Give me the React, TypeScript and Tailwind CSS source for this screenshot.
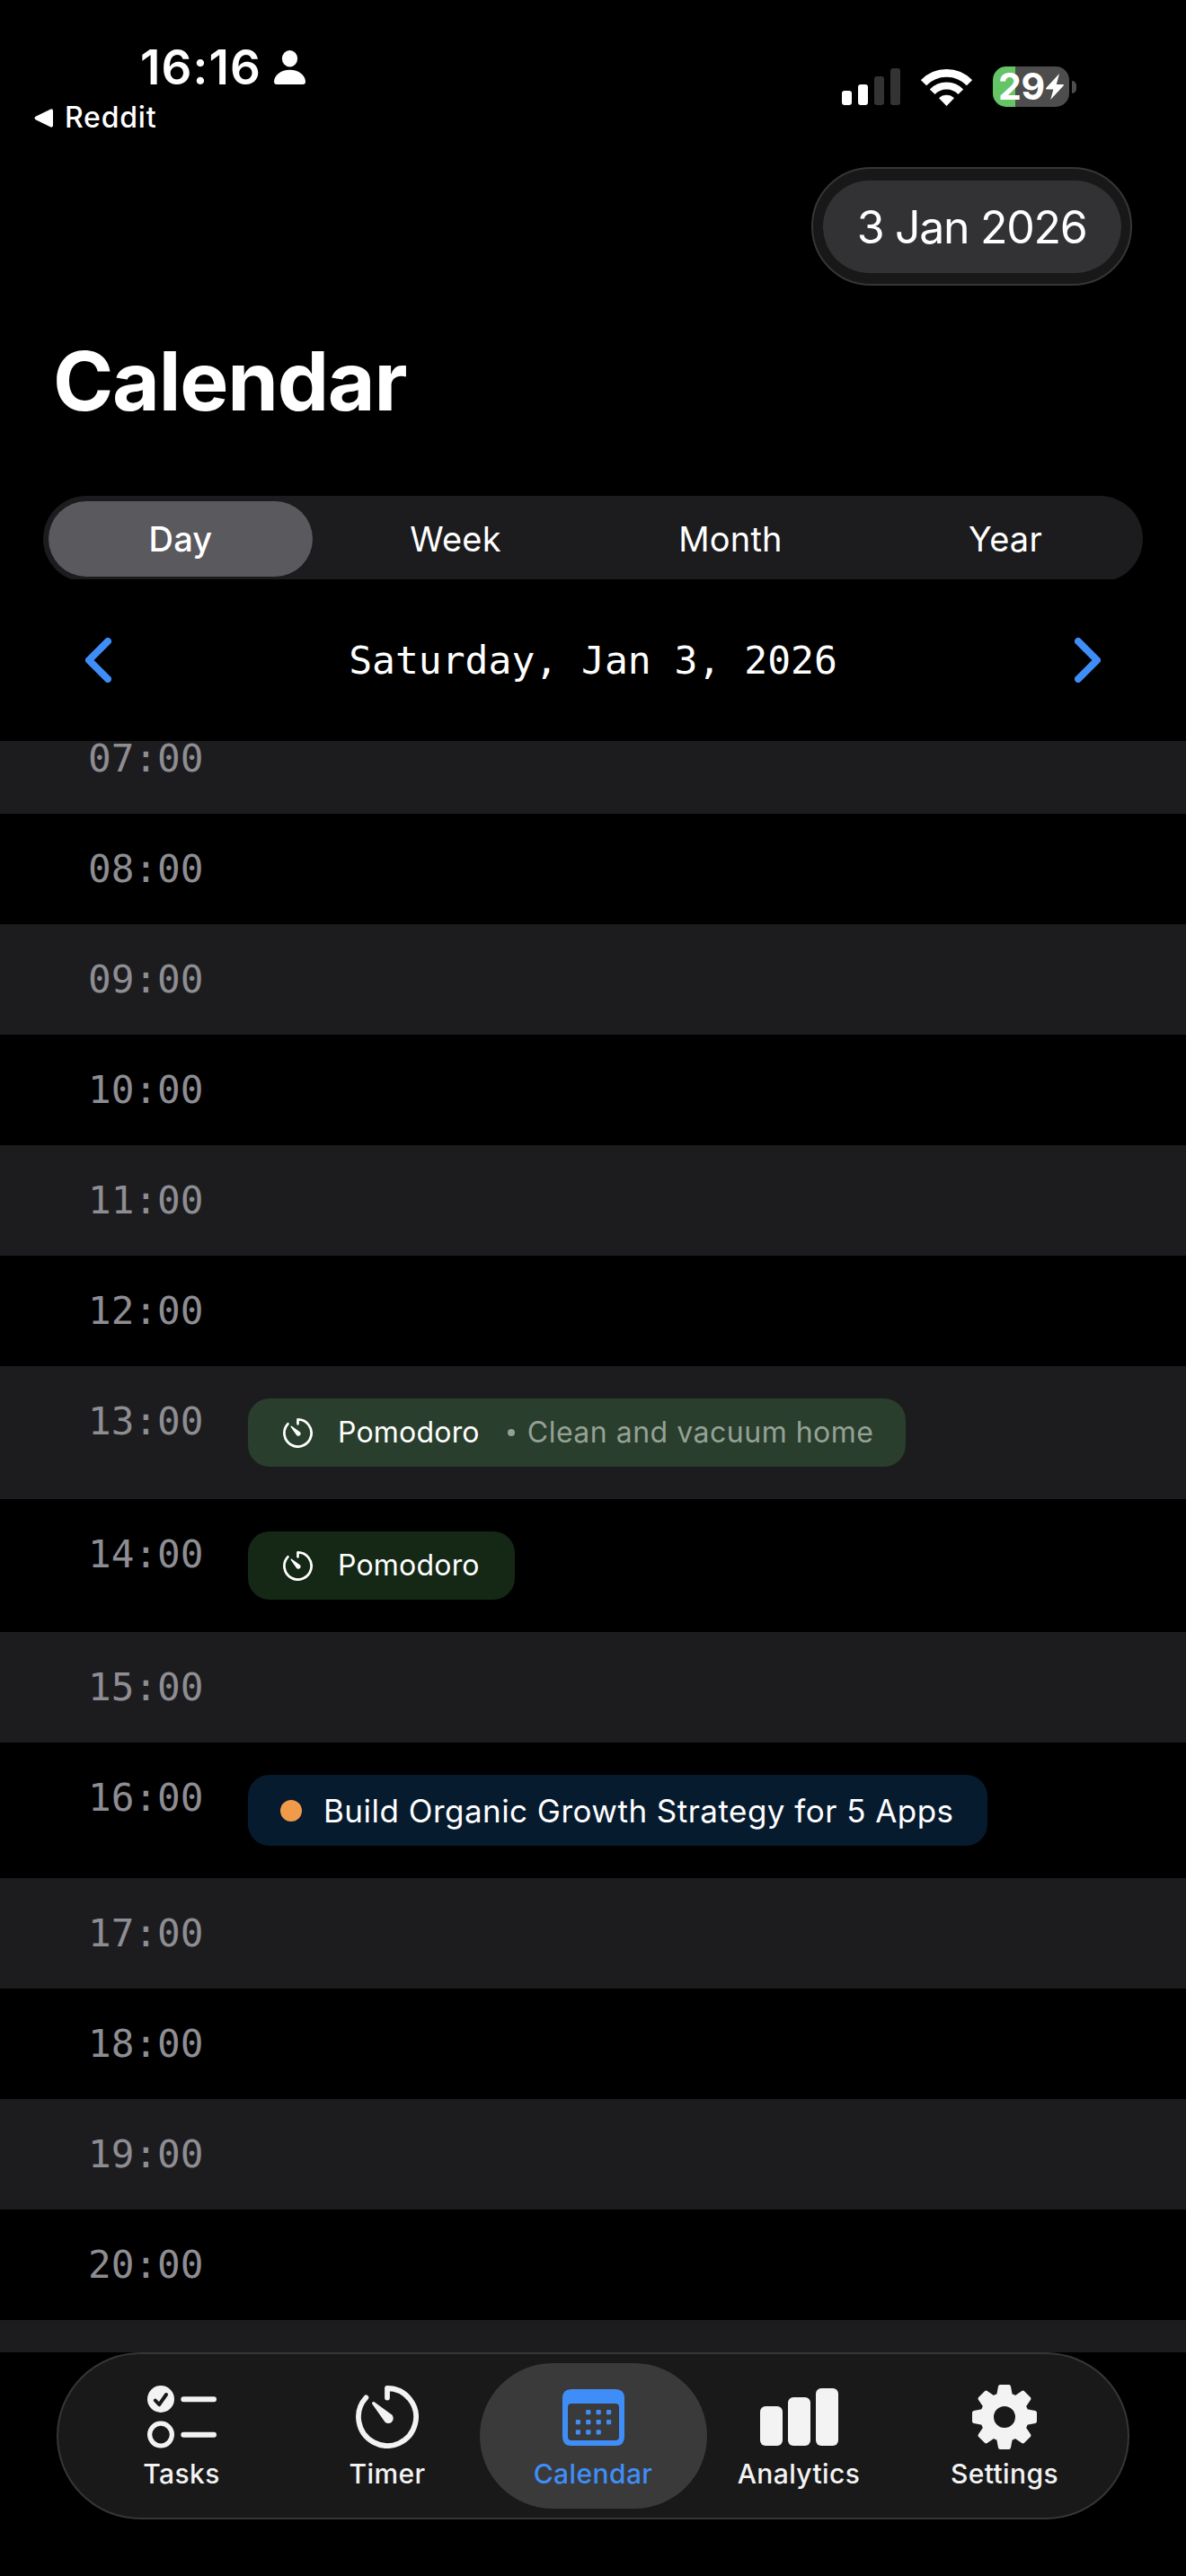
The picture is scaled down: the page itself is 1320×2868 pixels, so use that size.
import { FC, ReactNode, useState } from "react";
import clsx from "clsx";

type TabId = "tasks" | "timer" | "calendar" | "analytics" | "settings";

interface HourSlot {
  hour: string;
  className: string;
  event?: ReactNode;
}

const TimerIcon: FC<{ className?: string }> = ({ className }) => (
  <svg viewBox="0 0 70 70" fill="none" className={className}>
    <path d="M35 13.5V3A32 32 0 1 1 11.4 13.4" stroke="currentColor" strokeWidth="5.8" strokeLinecap="round" strokeLinejoin="round" />
    <path d="M18.3 20.6C17.4 19.2 19.2 17.4 20.6 18.3L38.4 31.3A5.6 5.6 0 1 1 31 38.6Z" fill="currentColor" />
  </svg>
);

const TasksIcon: FC = () => (
  <svg viewBox="0 0 77 70" fill="none" className="h-[70px] w-[77px]">
    <circle cx="15" cy="15" r="15" fill="currentColor" />
    <path d="M8.8 16.5L13.2 21.2L21 10" stroke="#191919" strokeWidth="4" strokeLinecap="round" strokeLinejoin="round" />
    <circle cx="15" cy="54.6" r="12.4" stroke="currentColor" strokeWidth="5.2" />
    <path d="M40.3 15.2H74M40.3 54.8H74" stroke="currentColor" strokeWidth="6" strokeLinecap="round" />
  </svg>
);

const CalendarIcon: FC = () => {
  const dots = [[1, 0], [2, 0], [3, 0], [0, 1], [1, 1], [2, 1], [3, 1], [0, 2], [1, 2], [2, 2]];
  return (
    <svg viewBox="0 0 69 63" className="h-[63px] w-[69px]" fill="currentColor">
      <path
        fillRule="evenodd"
        d="M10 0H59Q69 0 69 10V53Q69 63 59 63H10Q0 63 0 53V10Q0 0 10 0ZM10 16Q6 16 6 20V53Q6 57 10 57H59Q63 57 63 53V20Q63 16 59 16Z"
      />
      {dots.map(([col, row]) => (
        <rect key={`${col}-${row}`} x={14.8 + col * 11.4} y={23 + row * 11.1} width="5.2" height="5.2" rx="1" />
      ))}
    </svg>
  );
};

const AnalyticsIcon: FC = () => (
  <svg viewBox="0 0 87 64" className="h-[64px] w-[87px]" fill="currentColor">
    <rect x="0" y="20" width="25" height="44" rx="6" />
    <rect x="31" y="10" width="25" height="54" rx="6" />
    <rect x="62" y="0" width="25" height="64" rx="6" />
  </svg>
);

const SettingsIcon: FC = () => (
  <svg viewBox="-36 -36 72 72" className="h-[72px] w-[72px]" fill="currentColor">
    <circle r="19.5" fill="none" stroke="currentColor" strokeWidth="15" />
    {[0, 45, 90, 135, 180, 225, 270, 315].map(angle => (
      <path
        key={angle}
        transform={`rotate(${angle})`}
        d="M-4.8 -33.8H4.8L7 -22H-7Z"
        stroke="currentColor"
        strokeWidth="4.4"
        strokeLinejoin="round"
      />
    ))}
  </svg>
);

const StatusBar: FC = () => (
  <header className="flex h-[186px] flex-shrink-0 justify-between pr-[122px] pl-[38px] text-white">
    <div className="flex flex-col">
      <div className="mt-[45px] ml-[118px] flex h-[60px] items-center">
        <span className="text-[53px] leading-[60px] font-semibold tracking-[1.1px]">16:16</span>
        <svg viewBox="0 0 35 38" className="ml-[14px] h-[38px] w-[35px]" fill="currentColor">
          <ellipse cx="17.5" cy="9.2" rx="8.6" ry="9.2" />
          <path d="M0 35C0 28 7.5 21.8 17.5 21.8S35 28 35 35Q35 38 32 38H3Q0 38 0 35Z" />
        </svg>
      </div>
      <div className="mt-[6px] flex h-[40px] items-center gap-[13px]">
        <svg viewBox="0 0 21 21" className="h-[21px] w-[21px]" fill="currentColor">
          <path d="M18.5 0.4L1.6 8.8Q-0.6 10.5 1.6 12.2L18.5 20.6Q21 21 21 18.5V2.5Q21 0 18.5 0.4Z" />
        </svg>
        <span className="text-[32px] leading-[40px] font-medium tracking-[0.8px]">Reddit</span>
      </div>
    </div>
    <div className="mt-[74px] flex h-[45px] items-center">
      <div className="flex h-[41px] items-end gap-[7px]">
        <i className="h-[16px] w-[11px] rounded-[3px] bg-white" />
        <i className="h-[23px] w-[11px] rounded-[3px] bg-white" />
        <i className="h-[32px] w-[11px] rounded-[3px] bg-[#333333]" />
        <i className="h-[41px] w-[11px] rounded-[3px] bg-[#333333]" />
      </div>
      <svg viewBox="0 0 57 42" fill="none" stroke="currentColor" className="ml-[23px] h-[42px] w-[57px]">
        <path d="M3 16.2A35.4 35.4 0 0 1 54 16.2" strokeWidth="8.6" />
        <path d="M12.7 26.2A21.8 21.8 0 0 1 44.3 26.2" strokeWidth="8" />
        <path d="M28.5 42L20 33.2A12.5 12.5 0 0 1 37 33.2Z" fill="currentColor" stroke="none" />
      </svg>
      <div className="ml-[23px] flex h-[45px] w-[85px] items-center justify-center rounded-[15px] bg-[linear-gradient(to_right,#65c466_25px,#4d4d4d_25px)]">
        <span className="text-[41px] leading-[45px] font-bold tracking-[-0.3px]">29</span>
        <svg viewBox="0 0 20 29" className="ml-px h-[29px] w-[20px]" fill="currentColor">
          <path d="M15 0L0 16.2Q-0.4 17.4 1 17.4H8.4L5.2 29L19.8 13.2Q20.4 12 19 12H11.8Z" />
        </svg>
      </div>
      <i className="ml-[3px] h-[14px] w-[5px] rounded-r-full bg-[#4d4d4d]" />
    </div>
  </header>
);

const EventChip: FC<{ title: string; note?: string; className: string }> = ({ title, note, className }) => (
  <div className={clsx("mt-9 flex h-[76px] items-center rounded-[24px] pl-[39px] text-[32px] leading-[40px]", className)}>
    <TimerIcon className="h-[33px] w-[33px] text-white" />
    <span className="ml-[28px] tracking-[0.2px] text-white">{title}</span>
    {note && (
      <span className="ml-[31px] flex items-center gap-[14px] tracking-[0.5px] whitespace-nowrap text-[#95a197]">
        <i className="h-[8px] w-[8px] rounded-full bg-current" />
        {note}
      </span>
    )}
  </div>
);

const TaskChip: FC<{ title: string }> = ({ title }) => (
  <div className="mt-9 flex h-[79px] w-[823px] items-center rounded-[24px] bg-[#071b2f] pl-9">
    <i className="h-6 w-6 rounded-full bg-[#f19a4a]" />
    <span className="ml-[24px] text-[35px] leading-[44px] tracking-[0.47px] whitespace-nowrap text-white">{title}</span>
  </div>
);

const slots: HourSlot[] = [
  { hour: "07:00", className: "h-[123px] -mt-[42px]" },
  { hour: "08:00", className: "h-[123px]" },
  { hour: "09:00", className: "h-[123px]" },
  { hour: "10:00", className: "h-[123px]" },
  { hour: "11:00", className: "h-[123px]" },
  { hour: "12:00", className: "h-[123px]" },
  {
    hour: "13:00",
    className: "h-[148px]",
    event: <EventChip title="Pomodoro" note="Clean and vacuum home" className="w-[732px] bg-[#293e2c]" />,
  },
  { hour: "14:00", className: "h-[148px]", event: <EventChip title="Pomodoro" className="w-[297px] bg-[#152815]" /> },
  { hour: "15:00", className: "h-[123px]" },
  { hour: "16:00", className: "h-[151px]", event: <TaskChip title="Build Organic Growth Strategy for 5 Apps" /> },
  { hour: "17:00", className: "h-[123px]" },
  { hour: "18:00", className: "h-[123px]" },
  { hour: "19:00", className: "h-[123px]" },
  { hour: "20:00", className: "h-[123px]" },
  { hour: "", className: "h-[123px]" },
];

const DayList: FC = () => (
  <ul className="h-[1794px] flex-shrink-0 overflow-hidden">
    {slots.map(({ hour, className, event }, index) => (
      <li key={index} className={clsx("flex items-start", index % 2 === 0 ? "bg-[#1c1c1e]" : "bg-black", className)}>
        <span className="mt-[42px] w-[276px] flex-shrink-0 pl-[98px] font-['DejaVu_Sans_Mono',monospace] text-[42.7px] leading-[39px] text-[#8e8d93]">
          {hour}
        </span>
        {event}
      </li>
    ))}
  </ul>
);

const ranges = ["Day", "Week", "Month", "Year"];

const tabs: { id: TabId; label: string; icon: ReactNode }[] = [
  { id: "tasks", label: "Tasks", icon: <TasksIcon /> },
  { id: "timer", label: "Timer", icon: <TimerIcon className="h-[70px] w-[70px]" /> },
  { id: "calendar", label: "Calendar", icon: <CalendarIcon /> },
  { id: "analytics", label: "Analytics", icon: <AnalyticsIcon /> },
  { id: "settings", label: "Settings", icon: <SettingsIcon /> },
];

const App: FC = () => {
  const [range, setRange] = useState("Day");
  const [activeTab, setActiveTab] = useState<TabId>("calendar");

  return (
    <div className="flex h-[2868px] w-[1320px] flex-col overflow-hidden bg-black font-['Inter',sans-serif] text-white">
      <StatusBar />

      <div className="mr-[60px] flex h-[132px] w-[357px] flex-shrink-0 items-center justify-center self-end rounded-full border-2 border-[#363636] bg-[#181818]">
        <button className="h-[103px] w-[332px] rounded-full bg-[#323234] pt-[2px] text-[50px] tracking-[-1.3px]">3 Jan 2026</button>
      </div>

      <h1 className="mt-[56px] ml-[59px] h-[100px] flex-shrink-0 text-[91px] leading-[100px] font-bold tracking-[-1.2px]">Calendar</h1>

      <div className="mx-12 mt-[78px] h-[93px] flex-shrink-0 overflow-hidden">
        <div className="grid h-24 grid-cols-4 rounded-full bg-[#1c1c1e] py-1.5">
          {ranges.map(item => (
            <button
              key={item}
              onClick={() => setRange(item)}
              className={clsx(
                "mx-1.5 h-[84px] rounded-full text-[38px] tracking-[0.2px]",
                item === range ? "bg-[#5a595e] font-medium" : "font-normal"
              )}
            >
              {item}
            </button>
          ))}
        </div>
      </div>

      <div className="flex h-[180px] flex-shrink-0 items-center justify-between px-[95px]">
        <svg viewBox="0 0 29 50" fill="none" className="h-[50px] w-[29px]">
          <path d="M25 4L4 25L25 46" stroke="#3f8ef7" strokeWidth="8" strokeLinecap="round" strokeLinejoin="round" />
        </svg>
        <span className="font-['DejaVu_Sans_Mono',monospace] text-[43px] leading-[60px]">Saturday, Jan 3, 2026</span>
        <svg viewBox="0 0 29 50" fill="none" className="h-[50px] w-[29px]">
          <path d="M4 4L25 25L4 46" stroke="#3f8ef7" strokeWidth="8" strokeLinecap="round" strokeLinejoin="round" />
        </svg>
      </div>

      <DayList />

      <nav className="mx-[63px] flex h-[186px] flex-shrink-0 items-center justify-center rounded-full border-2 border-[#363636] bg-[#191919]">
        {tabs.map(({ id, label, icon }) => (
          <button
            key={id}
            onClick={() => setActiveTab(id)}
            className={clsx(
              "flex h-[162px] flex-shrink-0 flex-col items-center rounded-full pt-6",
              id === activeTab ? "-mx-3 w-[253px] bg-[#3a3a3a] text-[#3f8ef7]" : "w-[229px] text-[#f3f3f3]"
            )}
          >
            <span className="flex h-[72px] items-center">{icon}</span>
            <span className="mt-[7px] text-[30px] leading-[40px] font-medium tracking-[0.4px]">{label}</span>
          </button>
        ))}
      </nav>
    </div>
  );
};

export default App;
